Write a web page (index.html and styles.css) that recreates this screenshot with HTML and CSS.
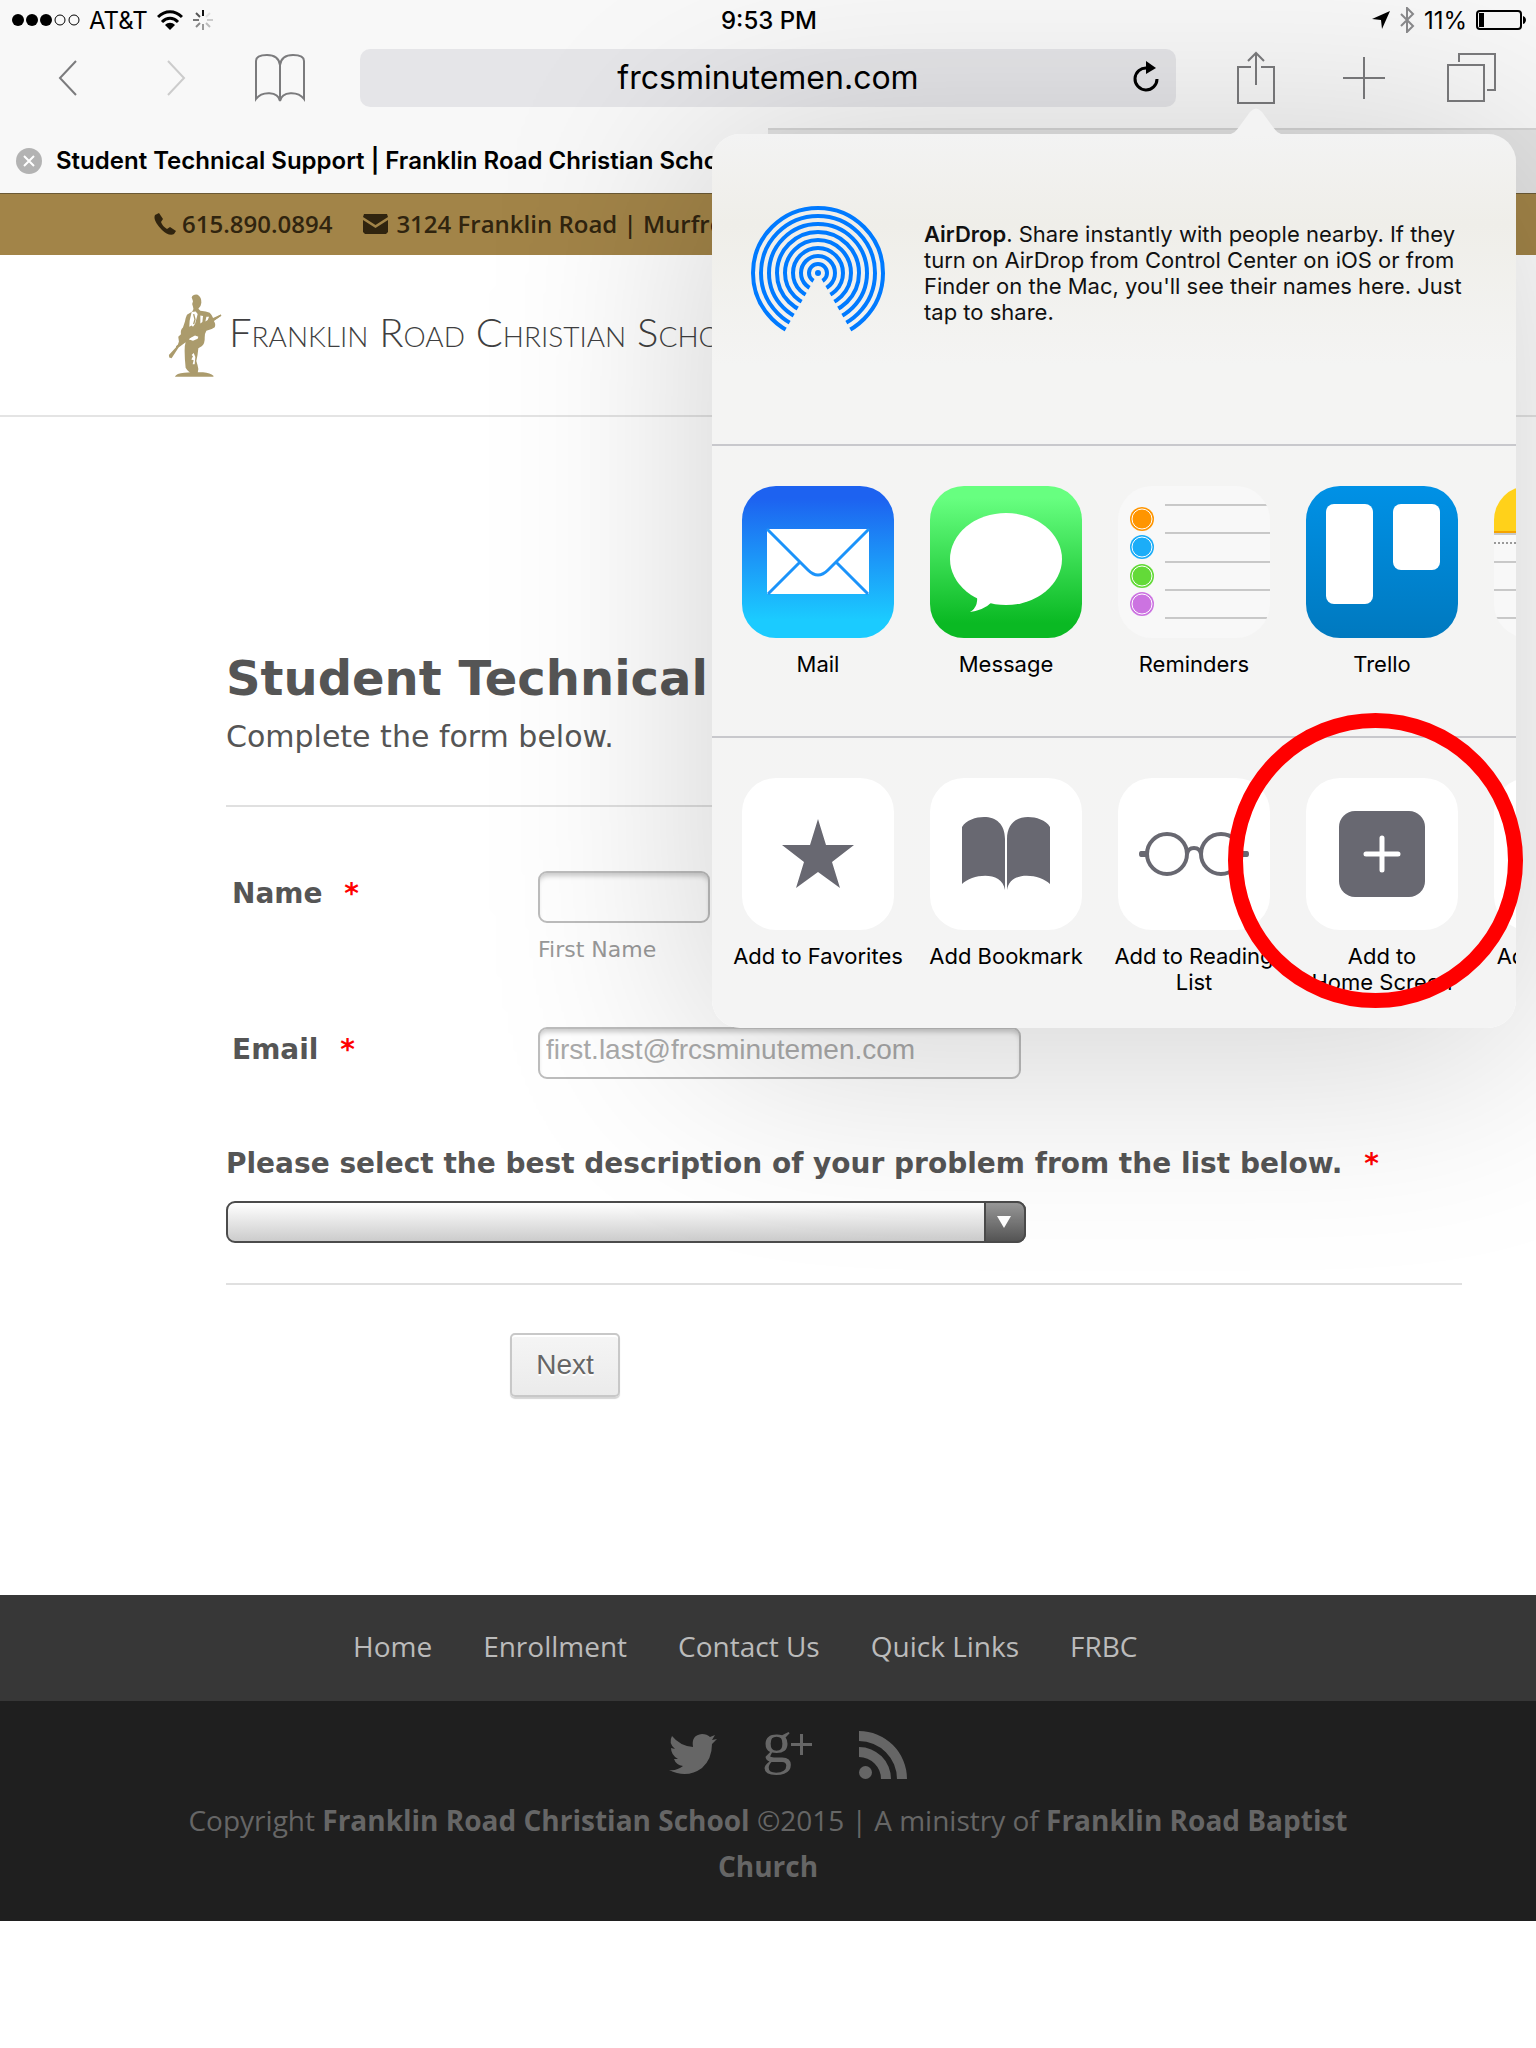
FILE: index.html
```html
<!DOCTYPE html>
<html lang="en">
<head>
    <meta charset="UTF-8">
    <meta name="viewport" content="width=device-width, initial-scale=1.0">
    <title>Student Technical Support | Franklin Road Christian School</title>
    <link rel="stylesheet" href="styles.css">
</head>
<body>

    <!-- Status bar -->
    <div class="status-bar">
        <div class="status-left">
            <svg width="68" height="12" viewBox="0 0 68 12">
                <circle cx="6" cy="6" r="6"/><circle cx="20" cy="6" r="6"/><circle cx="34" cy="6" r="6"/>
                <circle cx="48" cy="6" r="5" fill="none" stroke="#000"/><circle cx="62" cy="6" r="5" fill="none" stroke="#000"/>
            </svg>
            <span>AT&amp;T</span>
            <svg width="26" height="20" viewBox="0 0 26 20" fill="none" stroke="#000" stroke-width="3">
                <path d="M1 7C8 0 18 0 25 7M5 12C10 7 16 7 21 12"/>
                <path d="M8 15C11 12 15 12 18 15L13 20Z" fill="#000" stroke="none"/>
            </svg>
            <svg class="spinner" width="22" height="22" viewBox="-11 -11 22 22" stroke-width="2">
                <path d="M0-4V-10" stroke="#111"/><path d="M3-3L7-7" stroke="#e0e0e0"/><path d="M4 0H10" stroke="#ccc"/><path d="M3 3L7 7" stroke="#bbb"/>
                <path d="M0 4V10" stroke="#999"/><path d="M-3 3L-7 7" stroke="#888"/><path d="M-4 0H-10" stroke="#777"/><path d="M-3-3L-7-7" stroke="#555"/>
            </svg>
        </div>
        <span class="clock">9:53 PM</span>
        <div class="status-right">
            <svg width="18" height="18" viewBox="0 0 18 18"><path d="M18 0L10 18L9 9L0 8Z"/></svg>
            <svg class="bluetooth" width="16" height="26" viewBox="0 0 16 26" fill="none" stroke="#8a8a8c" stroke-width="2"><path d="M2 7L14 19L8 25V1L14 7L2 19"/></svg>
            <span>11%</span>
            <svg class="battery" width="50" height="20" viewBox="0 0 50 20"><rect x="1" y="1" width="44" height="18" rx="3" fill="none" stroke="#000" stroke-width="2"/><rect x="3" y="3" width="5" height="14"/><path d="M47 6Q50 7 50 10T47 14Z"/></svg>
        </div>
    </div>

    <!-- Safari toolbar -->
    <div class="toolbar">
        <button class="tool" aria-label="Back"><svg width="20" height="38" viewBox="0 0 20 38"><path d="M18 2L2 19L18 36"/></svg></button>
        <button class="tool off" aria-label="Forward"><svg width="20" height="38" viewBox="0 0 20 38"><path d="M2 2L18 19L2 36"/></svg></button>
        <button class="tool book" aria-label="Bookmarks"><svg width="52" height="50" viewBox="0 0 52 50"><path d="M26 48C24 38 8 38 2 46V8C2 3 8 2 13 2C20 2 25 5 26 12C27 5 32 2 39 2C44 2 50 3 50 8V46C44 38 28 38 26 48V12"/></svg></button>
        <div class="address">
            <input type="text" value="frcsminutemen.com" aria-label="Address">
            <button class="reload" aria-label="Reload"><svg width="28" height="32" viewBox="0 0 28 32"><path d="M25 18A11 11 0 1 1 15 7" fill="none" stroke="#000" stroke-width="3"/><path d="M14 0L24 7L14 13Z"/></svg></button>
        </div>
        <button class="tool" aria-label="Share"><svg width="40" height="54" viewBox="0 0 40 54"><path d="M15 16H2V52H38V16H25M20 34V2M12 10L20 2L28 10"/></svg></button>
        <button class="tool" aria-label="New tab"><svg width="42" height="42" viewBox="0 0 42 42"><path d="M21 0V42M0 21H42"/></svg></button>
        <button class="tool" aria-label="Tabs"><svg width="50" height="50" viewBox="0 0 50 50"><path d="M1 12H37V48H1ZM12 9V1H48V37H40"/></svg></button>
    </div>

    <div class="tabs">
        <div class="tab active">
            <button class="close" aria-label="Close tab"><svg width="26" height="26" viewBox="0 0 26 26"><circle cx="13" cy="13" r="13" fill="#b3b3b3"/><path d="M8 8L18 18M18 8L8 18" stroke="#fff" stroke-width="2"/></svg></button>
            <span>Student Technical Support | Franklin Road Christian School</span>
        </div>
        <div class="tab"></div>
    </div>

    <!-- Website -->
    <div class="top-info">
        <a href="#">
            <svg width="22" height="22" viewBox="0 0 22 22"><path d="M1 2L5 0L9 6L7 9C8 12 10 14 13 16L16 14L22 18L20 21C17 23 12 21 8 17C3 12-1 6 1 2Z"/></svg>615.890.0894
        </a>
        <a href="#" class="map">
            <svg width="25" height="20" viewBox="0 0 25 20"><path d="M1 0H24L25 3L12.500 11L0 3ZM0 6L12.500 14L25 6V18L23 20H2L0 18Z"/></svg>3124 Franklin Road | Murfreesboro, TN
        </a>
    </div>

    <header class="site-header">
        <a href="#" class="logo">
            <svg width="54" height="83" viewBox="24 28 160 248" fill="#ab9b6c">
                <path d="M94 38Q98 28 112 30Q124 38 123 54Q122 66 114 72L120 78Q138 80 148 84Q156 92 158 100L181 89L183 93L160 108Q167 118 163 127Q154 134 138 138Q132 148 133 158Q134 176 124 184L114 190Q112 212 108 228Q112 240 114 252L112 264H90Q80 256 76 248Q73 220 73 198Q72 184 76 172L55 188L34 220L27 218L26 210L48 186Q54 180 56 170L54 156L62 148Q60 134 68 128L74 110Q76 98 80 90L96 80Q102 74 98 66Q94 56 98 50Z"/>
                <path d="M44 275Q48 265 72 263L92 262H128Q150 264 159 272V275Z"/>
                <path fill="#fff" d="M94 82L88 108L87 126L94 122L98 126L104 118L110 96L112 88L106 80ZM120 92L120 116L126 112L128 94ZM138 96L135 110L142 106L146 96ZM88 160L86 164L98 168L112 162L114 156L104 152ZM100 204L94 210L98 214L93 224L100 226L97 238L103 238L105 216Z"/>
                <path fill="none" stroke="#ab9b6c" stroke-width="4" d="M48 186L181 91M100 88L104 104L100 118M96 136L128 120"/>
            </svg>
            <span>Franklin Road Christian School</span>
        </a>
    </header>

    <main>
        <form class="support-form">
            <h1>Student Technical Support</h1>
            <p class="intro">Complete the form below.</p>
            <hr>
            <div class="field">
                <label for="name">Name <span class="required">*</span></label>
                <div>
                    <input type="text" id="name" class="short">
                    <small>First Name</small>
                </div>
            </div>
            <div class="field">
                <label for="email">Email <span class="required">*</span></label>
                <input type="email" id="email" placeholder="first.last@frcsminutemen.com">
            </div>
            <label for="problem" class="question">Please select the best description of your problem from the list below. <span class="required">*</span></label>
            <div class="select-box">
                <select id="problem"><option></option></select>
                <span class="arrow"></span>
            </div>
            <hr>
            <button type="button" class="next">Next</button>
        </form>
    </main>

    <footer>
        <nav class="footer-nav">
            <a href="#">Home</a>
            <a href="#">Enrollment</a>
            <a href="#">Contact Us</a>
            <a href="#">Quick Links</a>
            <a href="#">FRBC</a>
        </nav>
        <div class="footer-bottom">
            <div class="social">
                <a href="#" aria-label="Twitter"><svg width="48" height="48" viewBox="0 0 48 48"><path d="M0 39Q8 40 14 35Q7 34 5 28H9Q2 24 2 17L6 18Q-1 12 3 5Q11 15 24 16Q22 4 33 3Q38 3 41 6L46 4L43 9L48 8L43 13Q43 28 33 37Q18 48 0 39Z"/></svg></a>
                <a href="#" aria-label="Google Plus"><svg width="48" height="48" viewBox="0 0 48 48"><text x="-2" y="31" class="g">g</text><path d="M27 12H48V15H27ZM36 3H39V24H36Z"/></svg></a>
                <a href="#" aria-label="RSS"><svg width="48" height="48" viewBox="0 0 48 48"><circle cx="6.500" cy="41.500" r="6.500"/><path d="M0 0A48 48 0 0 1 48 48H38A38 38 0 0 0 0 10ZM0 16A32 32 0 0 1 32 48H22A22 22 0 0 0 0 26Z"/></svg></a>
            </div>
            <p>Copyright <strong>Franklin Road Christian School</strong> ©2015 | A ministry of <strong>Franklin Road Baptist Church</strong></p>
        </div>
    </footer>

    <!-- Share sheet -->
    <div class="share">
        <svg class="pointer" width="60" height="27" viewBox="0 0 60 27"><path d="M0 27C8 26 10 23 13 19L24 4Q30-3 36 4L47 19C50 23 52 26 60 27Z"/></svg>
        <div class="sheet">
            <div class="airdrop">
                <svg width="134" height="134" viewBox="-67 -67 134 134" fill="none" stroke="#007aff" stroke-width="4">
                    <clipPath id="wedge"><path d="M-70-70H70V70H40L0 0L-40 70H-70Z"/></clipPath>
                    <g clip-path="url(#wedge)">
                        <circle r="65"/><circle r="57"/><circle r="49"/><circle r="41"/><circle r="33"/><circle r="25"/><circle r="17"/><circle r="9"/>
                    </g>
                    <circle r="3" fill="#007aff" stroke="none"/>
                </svg>
                <p><strong>AirDrop</strong>. Share instantly with people nearby. If they turn on AirDrop from Control Center on iOS or from Finder on the Mac, you'll see their names here. Just tap to share.</p>
            </div>

            <div class="row">
                <button class="item">
                    <svg class="icon mail" viewBox="0 0 152 152"><path d="M25 43H127V108H25Z" fill="#fff"/><path d="M25 43L66 84Q76 94 86 84L127 43M26 108L58 76M126 108L94 76" fill="none" stroke="#1b93fa" stroke-width="3"/></svg>
                    Mail
                </button>
                <button class="item">
                    <svg class="icon message" viewBox="0 0 152 152" fill="#fff"><ellipse cx="76" cy="73" rx="56" ry="46"/><path d="M46 106Q50 120 40 126Q54 124 62 116Z"/></svg>
                    Message
                </button>
                <button class="item">
                    <svg class="icon reminders" viewBox="0 0 152 152">
                        <path d="M47 19H149M47 47H152M47 76H152M47 104H152M47 132H149" stroke="#999"/>
                        <g stroke="none"><circle cx="24" cy="33" r="12" fill="#ff9500"/><circle cx="24" cy="61" r="12" fill="#1badf8"/><circle cx="24" cy="90" r="12" fill="#63da38"/><circle cx="24" cy="118" r="12" fill="#cc73e1"/></g>
                        <g fill="none" stroke="#fff"><circle cx="24" cy="33" r="10"/><circle cx="24" cy="61" r="10"/><circle cx="24" cy="90" r="10"/><circle cx="24" cy="118" r="10"/></g>
                    </svg>
                    Reminders
                </button>
                <button class="item">
                    <svg class="icon trello" viewBox="0 0 152 152" fill="#fff"><rect x="20" y="18" width="47" height="100" rx="8"/><rect x="87" y="18" width="47" height="66" rx="8"/></svg>
                    Trello
                </button>
                <button class="item">
                    <svg class="icon notes" viewBox="0 0 152 152"><path d="M0 0H152V46H0Z" fill="#ffd11a"/><path d="M0 46H152" stroke="#f5a300" stroke-width="2"/><path d="M0 48H152M0 76H152M0 104H152M0 132H152" stroke="#999"/><path d="M0 57H152" stroke="#999" stroke-width="2" stroke-dasharray="2 2"/></svg>
                    Notes
                </button>
            </div>

            <div class="row">
                <button class="item">
                    <svg class="icon action" viewBox="0 0 152 152"><path d="M76 41L84 67H112L90 84L98 110L76 94L54 110L62 84L40 67H68Z"/></svg>
                    Add to Favorites
                </button>
                <button class="item">
                    <svg class="icon action" viewBox="0 0 152 152"><path d="M75 112C72 92 42 96 32 106V49C36 42 46 39 54 39C66 39 75 46 75 61ZM77 112V61C77 46 86 39 98 39C106 39 116 42 120 49V106C110 96 80 92 77 112Z"/></svg>
                    Add Bookmark
                </button>
                <button class="item">
                    <svg class="icon action" viewBox="0 0 152 152"><g fill="none" stroke="#686871" stroke-width="4"><circle cx="49" cy="76" r="20"/><circle cx="103" cy="76" r="20"/><path d="M69 76Q70 70 76 70T83 76"/></g><path d="M28 73H23Q21 73 21 76T23 79H28ZM124 73H129Q131 73 131 76T129 79H124Z"/></svg>
                    Add to Reading List
                </button>
                <button class="item">
                    <svg class="icon action" viewBox="0 0 152 152"><rect x="33" y="33" width="86" height="86" rx="16"/><path d="M76 60V92M60 76H92" stroke="#fff" stroke-width="5" stroke-linecap="round"/></svg>
                    Add to<br>Home Screen
                </button>
                <button class="item">
                    <svg class="icon action" viewBox="0 0 152 152"></svg>
                    Add to Photos
                </button>
            </div>
        </div>
        <div class="ring"></div>
    </div>

</body>
</html>
```
FILE: styles.css
```css
* {
    box-sizing: border-box;
}

body {
    margin: 0;
    position: relative;
    background: #fff;
    color: #000;
    font-family: Inter, "Liberation Sans", sans-serif;
    overflow-x: hidden;
}

button {
    border: none;
    background: none;
    padding: 0;
    font-family: inherit;
    color: inherit;
    cursor: pointer;
}

a {
    text-decoration: none;
    color: inherit;
}

svg {
    flex-shrink: 0;
}

/* Status bar */
.status-bar {
    display: grid;
    grid-template-columns: 1fr auto 1fr;
    align-items: center;
    height: 40px;
    padding: 0 10px 0 12px;
    background: #f8f8f8;
    font-size: 24px;
}

.status-left,
.status-right {
    display: flex;
    align-items: center;
    gap: 9px;
}

.status-right {
    justify-content: flex-end;
}

.clock {
    font-weight: 500;
}

/* Toolbar */
.toolbar {
    display: flex;
    align-items: center;
    height: 88px;
    padding: 0 10px 12px 14px;
    background: #f8f8f8;
}

.tool {
    width: 108px;
    display: flex;
    justify-content: center;
}

.tool.book {
    width: 100px;
}

.tool path {
    fill: none;
    stroke: #7b7b7d;
    stroke-width: 2;
}

.tool.off path {
    stroke: #ccc;
}

.address {
    position: relative;
    flex: 1;
    margin: 0 26px 0 30px;
}

.address input {
    display: block;
    width: 100%;
    height: 58px;
    padding: 0 0 2px;
    border: none;
    border-radius: 10px;
    background: #e5e5e8;
    text-align: center;
    font-family: inherit;
    font-size: 32px;
}

.reload {
    position: absolute;
    right: 16px;
    top: 12px;
}

.tabs {
    display: flex;
    height: 66px;
    border-bottom: 1px solid #6b5a36;
}

.tab {
    flex: 1;
    display: flex;
    align-items: center;
    gap: 14px;
    min-width: 0;
    padding: 0 16px 2px;
    background: #e3e3e3;
    border-top: 2px solid #d5d5d5;
    font-size: 24px;
    font-weight: 600;
    white-space: nowrap;
    overflow: hidden;
}

.tab.active {
    background: #f8f8f8;
    border-top-color: #f8f8f8;
}

.close {
    display: flex;
}

/* Gold bar with phone and address */
.top-info {
    display: flex;
    align-items: center;
    gap: 31px;
    height: 61px;
    padding: 0 0 2px 154px;
    background: #a28448;
    color: #30240f;
    font-family: "Open Sans", sans-serif;
    font-size: 24px;
    font-weight: 600;
    white-space: nowrap;
}

.top-info a {
    display: flex;
    align-items: center;
    gap: 6px;
}

.top-info .map {
    gap: 8px;
}

.top-info svg {
    fill: #30240f;
}

.site-header {
    height: 162px;
    padding: 39px 0 0 168px;
    border-bottom: 2px solid #e4e4e4;
}

.logo {
    display: flex;
    gap: 7px;
    color: #3f3f41;
    font-family: Lato, sans-serif;
    font-size: 40px;
    font-weight: 300;
    line-height: 76px;
    font-variant: small-caps;
    white-space: nowrap;
}

/* Support form */
.support-form {
    padding: 230px 74px 198px 226px;
    color: #555;
    font-family: "DejaVu Sans", sans-serif;
}

h1 {
    margin: 0;
    font-size: 48px;
    line-height: 62px;
    white-space: nowrap;
}

.intro {
    margin: 8px 0 48px;
    font-size: 30px;
    line-height: 40px;
}

hr {
    height: 2px;
    margin: 0;
    border: none;
    background: #e0e0e0;
}

.field {
    display: grid;
    grid-template-columns: 312px 1fr;
    margin-top: 64px;
}

.field label,
.question {
    font-size: 28px;
    font-weight: bold;
    line-height: 46px;
}

.field label {
    padding-left: 6px;
}

.required {
    margin-left: 12px;
    color: #f00;
}

.support-form input {
    display: block;
    width: 483px;
    height: 52px;
    padding: 0 6px 6px;
    border: 2px solid #bdbdbd;
    border-radius: 9px;
    background: #fff;
    box-shadow: inset 0 5px 5px -2px #ccc;
    font-family: "Liberation Sans", sans-serif;
    font-size: 28px;
}

.support-form input.short {
    width: 172px;
}

.support-form input::placeholder {
    color: #aaa;
}

small {
    display: block;
    margin-top: 13px;
    color: #999;
    font-size: 22px;
    line-height: 27px;
}

.question {
    display: block;
    margin-top: 62px;
}

.select-box {
    position: relative;
    width: 800px;
    margin: 14px 0 40px;
}

select {
    display: block;
    width: 100%;
    height: 42px;
    appearance: none;
    border: 2px solid #4b4b4b;
    border-radius: 9px;
    background: linear-gradient(#fff, #ccc);
}

.arrow {
    position: absolute;
    top: 0;
    right: 0;
    width: 42px;
    height: 42px;
    border: 2px solid #4b4b4b;
    border-radius: 0 9px 9px 0;
    background: linear-gradient(#999, #555);
    pointer-events: none;
}

.arrow::after {
    content: "";
    position: absolute;
    left: 11px;
    top: 13px;
    border: 7px solid transparent;
    border-top: 12px solid #fff;
    border-bottom: none;
}

.next {
    display: block;
    width: 110px;
    height: 64px;
    margin: 48px 0 0 284px;
    border: 2px solid #c8c8c8;
    border-radius: 5px;
    background: linear-gradient(#f5f5f5, #ebebeb);
    box-shadow: inset 0 2px 0 #fff, 0 2px 1px #d5d5d5;
    color: #666;
    font-family: "Liberation Sans", sans-serif;
    font-size: 28px;
    text-shadow: 0 2px 0 #fff;
}

/* Footer */
footer {
    margin-bottom: 126px;
    font-family: "Open Sans", sans-serif;
    font-size: 28px;
}

.footer-nav {
    display: flex;
    align-items: center;
    gap: 51px;
    height: 106px;
    padding: 0 0 4px 353px;
    background: #373737;
    color: #bbb;
}

.footer-bottom {
    height: 220px;
    padding: 30px 180px 0;
    background: #1f1f1f;
    color: #666;
    text-align: center;
}

.social {
    display: flex;
    justify-content: center;
    gap: 47px;
    padding-left: 39px;
}

.social svg {
    display: block;
    fill: #666;
    overflow: visible;
}

.g {
    font-family: "Liberation Serif", serif;
    font-size: 60px;
}

.footer-bottom p {
    margin: 18px 0 0;
    line-height: 46px;
}

.footer-bottom strong {
    font-weight: 700;
}

/* Share sheet */
.share {
    position: absolute;
    top: 134px;
    right: 20px;
    width: 804px;
    border-radius: 28px;
    box-shadow: 0 20px 220px 10px rgba(0, 0, 0, 0.18);
}

.pointer {
    position: absolute;
    top: -26px;
    right: 230px;
    fill: #f3f3f3;
}

.sheet {
    border-radius: 28px;
    background: linear-gradient(#f3f3f3, #efeee9 90px, #f4f4f3 230px, #f4f4f4);
    overflow: hidden;
}

.airdrop {
    display: flex;
    gap: 39px;
    height: 310px;
    padding: 72px 40px 0 39px;
}

.airdrop p {
    margin: 15px 0 0;
    font-size: 22px;
    line-height: 26px;
    color: #111;
}

.airdrop strong {
    font-weight: 600;
}

.row {
    display: flex;
    height: 292px;
    padding: 40px 0 0 12px;
    border-top: 2px solid #c8c8cc;
}

.item {
    display: flex;
    flex-direction: column;
    align-items: center;
    flex: 0 0 188px;
    height: 220px;
    font-size: 22px;
    line-height: 26px;
}

.icon {
    width: 152px;
    height: 152px;
    margin-bottom: 13px;
    border-radius: 34px;
}

.mail {
    background: linear-gradient(#1d62f0 8%, #1bcbff 88%);
}

.message {
    background: linear-gradient(#67ff80 8%, #0ab923 90%);
}

.reminders,
.notes {
    background: #f8f8f8;
}

.trello {
    background: linear-gradient(#0091e6, #0079bf);
}

.action {
    background: #fff;
    fill: #686871;
}

/* Red circle around Add to Home Screen */
.ring {
    position: absolute;
    top: 579px;
    right: -7px;
    width: 295px;
    height: 295px;
    border: 15px solid #f00;
    border-radius: 50%;
}
```
